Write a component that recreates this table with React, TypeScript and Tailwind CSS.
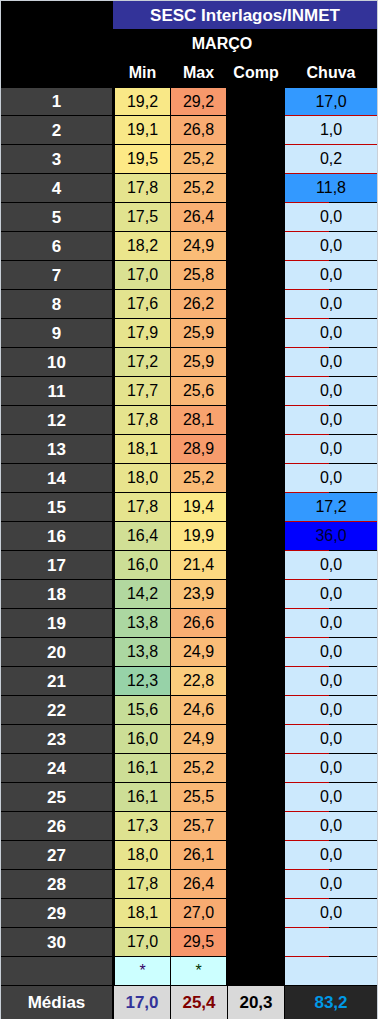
import React from 'react';

const mins = [
  19.2, 19.1, 19.5, 17.8, 17.5, 18.2, 17.0, 17.6, 17.9, 17.2, 17.7, 17.8, 18.1, 18.0, 17.8,
  16.4, 16.0, 14.2, 13.8, 13.8, 12.3, 15.6, 16.0, 16.1, 16.1, 17.3, 18.0, 17.8, 18.1, 17.0,
];
const maxs = [
  29.2, 26.8, 25.2, 25.2, 26.4, 24.9, 25.8, 26.2, 25.9, 25.9, 25.6, 28.1, 28.9, 25.2, 19.4,
  19.9, 21.4, 23.9, 26.6, 24.9, 22.8, 24.6, 24.9, 25.2, 25.5, 25.7, 26.1, 26.4, 27.0, 29.5,
];
const rain: (number | null)[] = [
  17.0, 1.0, 0.2, 11.8, 0, 0, 0, 0, 0, 0, 0, 0, 0, 0, 17.2,
  36.0, 0, 0, 0, 0, 0, 0, 0, 0, 0, 0, 0, 0, 0, null,
];

const fmt = (v: number) => v.toFixed(1).replace('.', ',');

// 3-colour scale like the sheet's conditional format
const LO = [151, 210, 168];
const MID = [253, 233, 134];
const HI = [247, 150, 106];
function scale(v: number) {
  const lo = 12.3;
  const mid = 19.45;
  const hi = 29.5;
  let a = LO;
  let b = MID;
  let t = 0;
  if (v <= mid) {
    t = (v - lo) / (mid - lo);
  } else {
    a = MID;
    b = HI;
    t = (v - mid) / (hi - mid);
  }
  t = Math.max(0, Math.min(1, t));
  const c = a.map((x, i) => Math.round(x + (b[i] - x) * t));
  return `rgb(${c[0]},${c[1]},${c[2]})`;
}

function rainBg(i: number) {
  if (i === 15) return 'bg-[#0000ff] text-[#000033]';
  if (i === 0 || i === 3 || i === 14) return 'bg-[#3399ff] text-black';
  return 'bg-[#cce9fd] text-black';
}

function DataRow({ i }: { i: number }) {
  const fullRed = i <= 2 || i === 14;
  const r = rain[i];
  return (
    <div className={`flex ${i === 0 ? 'h-[28px]' : 'h-[29px]'}`}>
      <div className="w-[111px] bg-[#404040] border-b border-black flex items-center justify-center text-white font-bold text-[17px]">
        {i + 1}
      </div>
      <div className="w-[3px]" />
      <div
        className="w-[55px] border-b border-black flex items-center justify-center text-black text-[16px]"
        style={{ backgroundColor: scale(mins[i]) }}
      >
        {fmt(mins[i])}
      </div>
      <div className="w-[1px]" />
      <div
        className="w-[55px] border-b border-black flex items-center justify-center text-black text-[16px]"
        style={{ backgroundColor: scale(maxs[i]) }}
      >
        {fmt(maxs[i])}
      </div>
      <div className="w-[59px]" />
      <div className={`w-[92px] flex flex-col ${rainBg(i)}`}>
        <div className="flex-1 flex items-center justify-center text-[16px]">
          {r === null ? '' : fmt(r)}
        </div>
        <div className="flex h-[1px]">
          <div className="w-[44px] bg-[#c00000]" />
          <div className={`flex-1 ${fullRed ? 'bg-[#c00000]' : 'bg-black'}`} />
        </div>
      </div>
    </div>
  );
}

export default function App() {
  return (
    <div className="w-[378px] h-[1019px] overflow-hidden bg-black border-t border-l border-r border-[#c9d0d8] font-['Liberation_Sans',Arial,sans-serif] leading-none">
      {/* title */}
      <div className="flex h-[28px]">
        <div className="w-[112px]" />
        <div className="w-[264px] bg-[#333399] flex items-center justify-center text-white font-bold text-[17px]">
          SESC Interlagos/INMET
        </div>
      </div>

      <div className="flex h-[29px]">
        <div className="w-[114px]" />
        <div className="w-[214px] flex items-center justify-center text-white font-bold text-[16px]">
          MARÇO
        </div>
      </div>

      {/* column headers */}
      <div className="flex h-[30px] text-white font-bold text-[16px]">
        <div className="w-[114px]" />
        <div className="w-[55px] flex items-center justify-center">Min</div>
        <div className="w-[1px]" />
        <div className="w-[55px] flex items-center justify-center">Max</div>
        <div className="w-[1px]" />
        <div className="w-[58px] flex items-center justify-center">Comp</div>
        <div className="w-[92px] flex items-center justify-center">Chuva</div>
      </div>

      {mins.map((_, i) => (
        <DataRow key={i} i={i} />
      ))}

      {/* blank row */}
      <div className="flex h-[29px]">
        <div className="w-[111px] bg-[#404040] border-b border-black" />
        <div className="w-[3px]" />
        <div className="w-[55px] bg-[#ccffff] border-b border-black flex items-center justify-center text-[#330066] text-[16px]">
          *
        </div>
        <div className="w-[1px]" />
        <div className="w-[55px] bg-[#ccffff] border-b border-black flex items-center justify-center text-[#003300] text-[16px]">
          *
        </div>
        <div className="w-[59px]" />
        <div className="w-[92px] bg-[#cce9fd] border-b border-black" />
      </div>

      {/* averages */}
      <div className="flex h-[33px] font-bold text-[17px]">
        <div className="w-[111px] bg-[#404040] flex items-center justify-center text-white">Médias</div>
        <div className="w-[2px]" />
        <div className="w-[56px] bg-[#d9d9d9] flex items-center justify-center text-[#333399]">17,0</div>
        <div className="w-[1px]" />
        <div className="w-[56px] bg-[#d9d9d9] flex items-center justify-center text-[#800000]">25,4</div>
        <div className="w-[1px]" />
        <div className="w-[56px] bg-[#d9d9d9] flex items-center justify-center text-black">20,3</div>
        <div className="w-[1px]" />
        <div className="w-[92px] bg-[#262626] flex items-center justify-center text-[#0099e6]">83,2</div>
      </div>
    </div>
  );
}
